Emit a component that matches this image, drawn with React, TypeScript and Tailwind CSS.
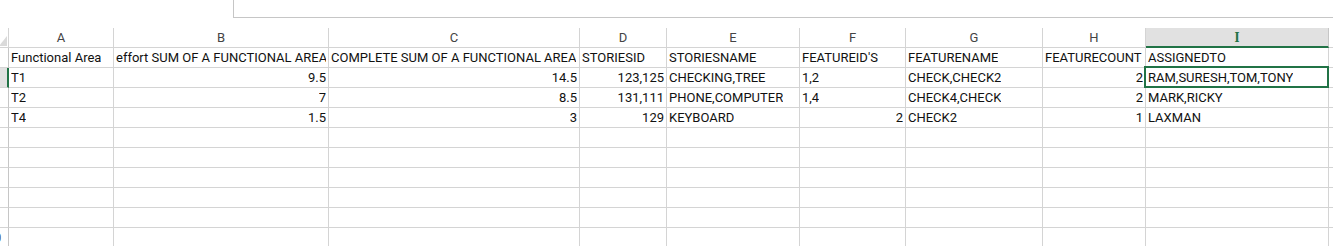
const cols = [
  { key: 'A', w: 105 },
  { key: 'B', w: 215 },
  { key: 'C', w: 251 },
  { key: 'D', w: 87 },
  { key: 'E', w: 133 },
  { key: 'F', w: 106 },
  { key: 'G', w: 137 },
  { key: 'H', w: 103 },
  { key: 'I', w: 183 },
];

type Cell = string | number | null;

const rows: Cell[][] = [
  ['Functional Area', 'effort SUM OF A FUNCTIONAL AREA', 'COMPLETE SUM OF A FUNCTIONAL AREA', 'STORIESID', 'STORIESNAME', "FEATUREID'S", 'FEATURENAME', 'FEATURECOUNT', 'ASSIGNEDTO'],
  ['T1', 9.5, 14.5, '123,125', 'CHECKING,TREE', '1,2', 'CHECK,CHECK2', 2, 'RAM,SURESH,TOM,TONY'],
  ['T2', 7, 8.5, '131,111', 'PHONE,COMPUTER', '1,4', 'CHECK4,CHECK', 2, 'MARK,RICKY'],
  ['T4', 1.5, 3, 129, 'KEYBOARD', 2, 'CHECK2', 1, 'LAXMAN'],
];

// thousands-grouped ids are stored as numbers too, so they sit on the right
const numeric = (v: Cell) => typeof v === 'number' || (typeof v === 'string' && /^\d{3},\d{3}$/.test(v));

const TOTAL_ROWS = 10;

export default function App() {
  const data: Cell[][] = Array.from({ length: TOTAL_ROWS }, (_, i) => rows[i] ?? cols.map(() => null));

  return (
    <div className="h-[246px] w-[1333px] overflow-hidden bg-white" style={{ fontFamily: 'Roboto, "Liberation Sans", sans-serif' }}>
      {/* formula bar edge */}
      <div className="flex h-[18px]">
        <div className="w-[233px]" />
        <div className="flex-1 border-b border-l border-[#c6c6c6]" />
      </div>
      <div className="h-[10px]" />

      {/* column headers */}
      <div className="flex h-[20px]">
        <div className="relative w-[9px] shrink-0 border-r border-b border-[#d4d4d4] bg-white">
          <svg className="absolute right-[1px] bottom-[1px]" width="8" height="10" viewBox="0 0 8 10">
            <path d="M8 0 L8 10 L0 10 Z" fill="#dadada" />
          </svg>
        </div>
        {cols.map((c) =>
          c.key === 'I' ? (
            <div
              key={c.key}
              style={{ width: c.w }}
              className="flex shrink-0 items-center justify-center border-r border-b-2 border-r-[#c6c6c6] border-b-[#217346] bg-[#e1e1e1] font-serif text-[14px] font-bold text-[#217346]"
            >
              {c.key}
            </div>
          ) : (
            <div
              key={c.key}
              style={{ width: c.w }}
              className="flex shrink-0 items-center justify-center border-r border-b border-[#d4d4d4] text-[13px] text-[#444]"
            >
              {c.key}
            </div>
          )
        )}
        <div className="flex-1 border-b border-[#d4d4d4]" />
      </div>

      {/* sheet body */}
      {data.map((row, r) => {
        const active = r === 1;
        return (
          <div key={r} className="flex h-[20px]">
            <div
              className={`relative w-[9px] shrink-0 overflow-hidden border-b border-[#d4d4d4] ${
                active ? 'border-r-2 border-r-[#217346] bg-[#e1e1e1]' : 'border-r border-r-[#c6c6c6]'
              }`}
            >
              <div className="absolute top-0 right-0 w-[28px] text-center text-[13px] leading-[19px] text-[#444]">{r + 1}</div>
            </div>
            {cols.map((c, ci) => {
              const v = row[ci];
              return (
                <div
                  key={c.key}
                  style={{ width: c.w }}
                  className={`relative flex shrink-0 items-end border-r border-b border-[#d4d4d4] px-[2px] text-[13px] leading-[18px] text-[#111] ${
                    numeric(v) ? 'justify-end' : 'justify-start'
                  }`}
                >
                  <span className="block overflow-hidden whitespace-nowrap">{v}</span>
                  {active && c.key === 'I' && (
                    <div className="pointer-events-none absolute -top-[2px] -left-[2px] -right-[1px] -bottom-[1px] border-2 border-[#217346]" />
                  )}
                </div>
              );
            })}
            <div className="flex-1 border-b border-[#d4d4d4]" />
          </div>
        );
      })}
    </div>
  );
}
